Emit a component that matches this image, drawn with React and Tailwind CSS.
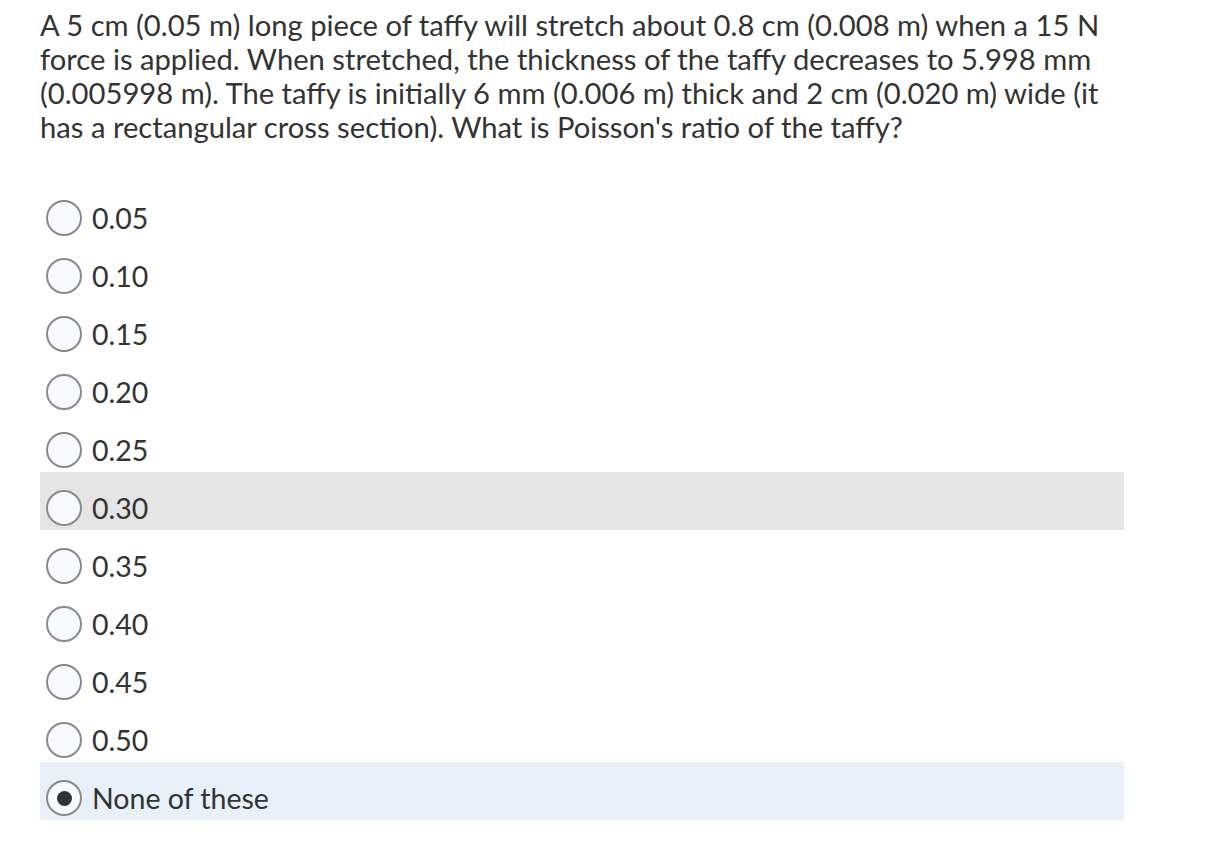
import { useState } from "react";

const options = [
  "0.05",
  "0.10",
  "0.15",
  "0.20",
  "0.25",
  "0.30",
  "0.35",
  "0.40",
  "0.45",
  "0.50",
  "None of these",
];

export default function App() {
  const [selected, setSelected] = useState("None of these");
  const hovered = "0.30";

  return (
    <div
      className="min-h-screen bg-white px-[40px] pt-[8px] text-[#333333]"
      style={{ fontFamily: "Lato, 'Open Sans', sans-serif" }}
    >
      <div className="w-[1084px]">
        <p className="text-[29.2px] leading-[34px]">
          A 5 cm (0.05 m) long piece of taffy will stretch about 0.8 cm (0.008
          m) when a 15 N force is applied. When stretched, the thickness of the
          taffy decreases to 5.998 mm (0.005998 m). The taffy is initially 6 mm
          (0.006 m) thick and 2 cm (0.020 m) wide (it has a rectangular cross
          section). What is Poisson's ratio of the taffy?
        </p>
        <div className="mt-[38px] flex flex-col">
          {options.map((opt) => {
            const isSel = selected === opt;
            return (
              <label
                key={opt}
                onClick={() => setSelected(opt)}
                className={
                  "flex h-[58px] items-start pt-[18px] pl-[6px] cursor-pointer " +
                  (isSel
                    ? "bg-[#e8f0fa]"
                    : opt === hovered
                    ? "bg-[#e5e5e5]"
                    : "")
                }
              >
                <span className="flex h-[36px] w-[36px] shrink-0 items-center justify-center rounded-full border-2 border-[#8a8a8a] bg-[#f8faff]">
                  {isSel && (
                    <span className="h-[15px] w-[15px] rounded-full bg-[#333333]" />
                  )}
                </span>
                <span className="ml-[10px] text-[28.5px] leading-[36px]">
                  {opt}
                </span>
              </label>
            );
          })}
        </div>
      </div>
    </div>
  );
}
